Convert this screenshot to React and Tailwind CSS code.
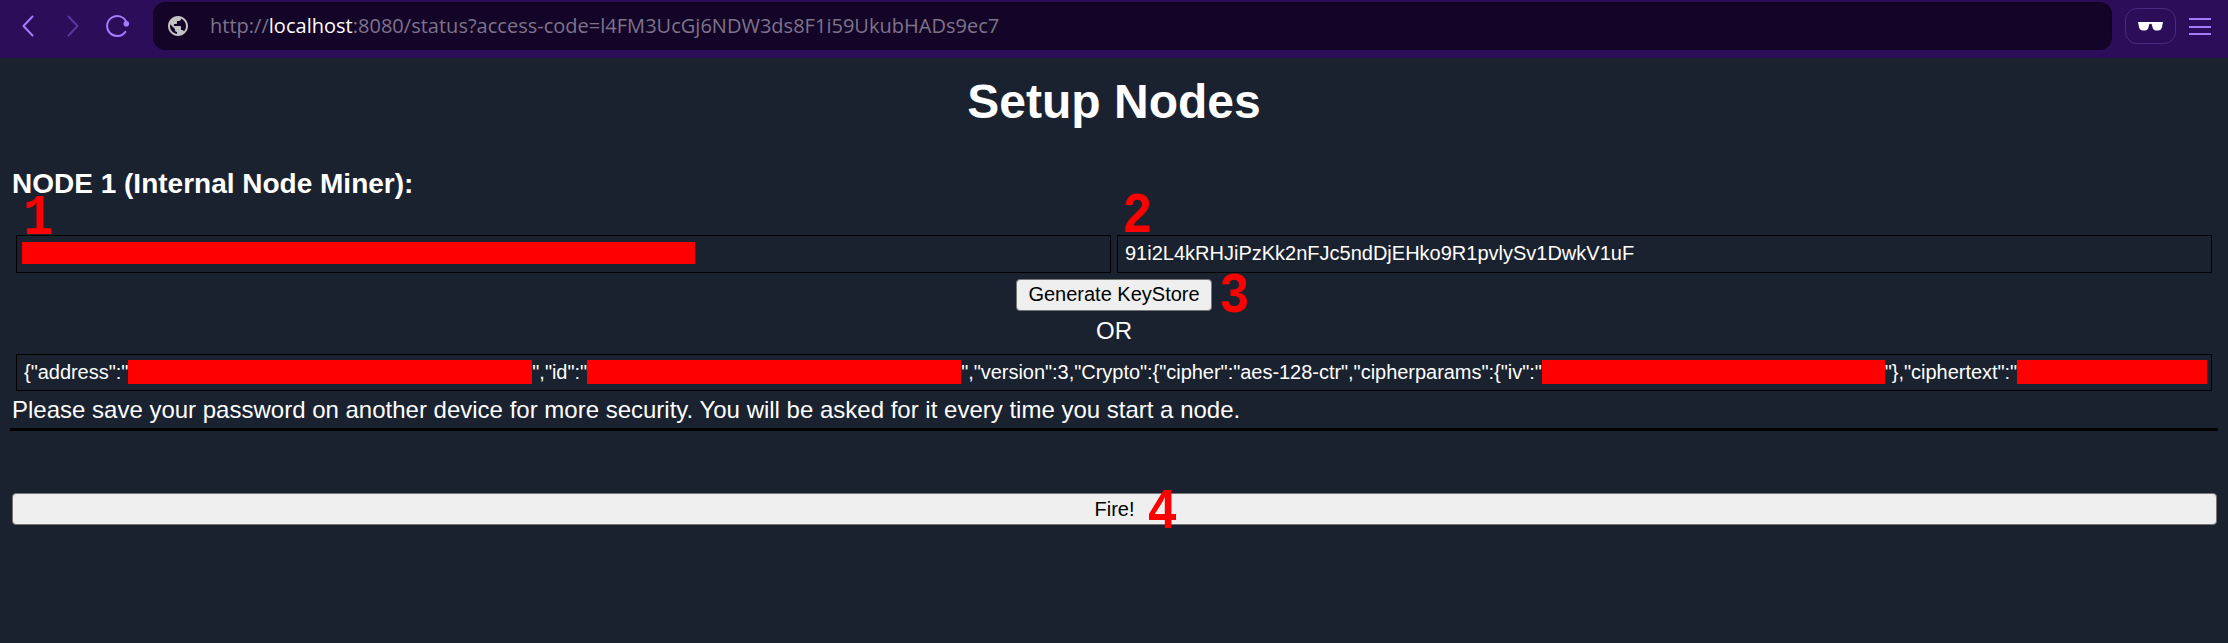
import { MdPublic } from "react-icons/md";

const Redacted = ({ className }) => <span className={`h-6 shrink-0 bg-[#ff0000] ${className}`} />;

const Marker = ({ children, className }) => (
  <span className={`absolute scale-x-[0.87] font-['Liberation_Mono',monospace] text-[58px] leading-[60px] font-bold text-[#ff0000] ${className}`}>
    {children}
  </span>
);

function Toolbar() {
  return (
    <header className="flex h-[58px] w-full items-start bg-[#2b0d59] text-[#a67cff]">
      <nav className="flex h-[52px] w-[153px] items-center">
        <svg className="ml-[20px] h-6 w-[16px]" viewBox="0 0 16 24" fill="none" stroke="currentColor" strokeWidth="2" strokeLinecap="round" strokeLinejoin="round"><path d="M12.500 2.500 3.500 12 12.500 21.500" /></svg>
        <svg className="ml-[30px] h-6 w-[16px] text-[#5b35a0]" viewBox="0 0 16 24" fill="none" stroke="currentColor" strokeWidth="2" strokeLinecap="round" strokeLinejoin="round"><path d="M2.500 2.500 11.500 12 2.500 21.500" /></svg>
        <svg className="ml-[22px] h-6 w-[28px]" viewBox="0 0 28 24" fill="none" stroke="currentColor" strokeWidth="2" strokeLinecap="round"><path d="M22.300 8A10 10 0 1 0 21.300 17.800" /><circle cx="22.300" cy="9.800" r="2.800" fill="currentColor" stroke="none" /></svg>
      </nav>
      <div className="mt-0.5 flex h-12 w-[1959px] items-center rounded-xl border border-[#12041f] bg-[#140428] pl-3">
        <MdPublic className="size-6 text-[#c3c3c3]" />
        <span className="ml-5 font-['Open_Sans',sans-serif] text-[20px] tracking-[0.015px] whitespace-pre text-[#7d748b]">
          http://<span className="text-white">localhost</span>:8080/status?access-code=l4FM3UcGj6NDW3ds8F1i59UkubHADs9ec7
        </span>
      </div>
      <div className="mt-2 ml-[13px] flex h-9 w-[51px] items-center justify-center rounded-xl border border-[#4a2a80]">
        <svg className="h-[9px] w-[25px]" viewBox="0 0 25 9" fill="white"><path d="M0 0H25L24 5Q23.200 8.500 20 8.500H18Q15.400 8.500 14.400 5L13.600 2Q12.500 1.300 11.400 2L10.600 5Q9.600 8.500 7 8.500H5Q1.800 8.500 1 5Z" /></svg>
      </div>
      <div className="mt-[18px] ml-[13px] flex w-[22px] flex-col gap-[5.500px]">
        <span className="h-0.5 bg-[#a67cff]" /><span className="h-0.5 bg-[#a67cff]" /><span className="h-0.5 bg-[#a67cff]" />
      </div>
    </header>
  );
}

export default function App() {
  return (
    <div className="flex h-[643px] w-[2228px] flex-col overflow-hidden bg-[#1a2230] font-['Liberation_Sans',Arial,sans-serif] text-2xl text-white">
      <Toolbar />
      <main className="flex flex-col px-3">
        <h1 className="mt-4 text-center text-[48px] leading-[56px] font-bold">Setup Nodes</h1>
        <h3 className="relative mt-[38px] text-[28px] leading-8 font-bold">
          NODE 1 (Internal Node Miner):
          <Marker className="top-[21px] left-[9px]">1</Marker>
        </h3>
        <div className="mt-[35px] flex gap-1.5 px-1">
          <div className="flex h-[38px] w-[1095px] border border-black pt-1.5 pl-[5px]">
            <span className="h-[22px] w-[673px] bg-[#ff0000]" />
          </div>
          <div className="relative flex h-[38px] w-[1095px] items-center border border-black pb-0.5 pl-[7px] text-[20px]">
            91i2L4kRHJiPzKk2nFJc5ndDjEHko9R1pvlySv1DwkV1uF
            <Marker className="-top-[49px] left-[2px]">2</Marker>
          </div>
        </div>
        <div className="relative mt-1.5 flex justify-center">
          <button className="h-8 w-[196px] rounded-[4px] border border-[#767676] bg-[#efefef] pb-0.5 text-[20px] leading-[28px] text-black">Generate KeyStore</button>
          <Marker className="-top-[12px] left-[1205px]">3</Marker>
        </div>
        <div className="mt-1.5 text-center leading-7">OR</div>
        <div className="mt-[9px] ml-1 flex h-[37px] w-[2196px] items-start overflow-hidden border border-black pt-[5px] pl-[7px] text-[20px] leading-6 tracking-[-0.033px] whitespace-pre">
          {'{"address":"'}<Redacted className="w-[404px]" />{'","id":"'}<Redacted className="w-[374px]" />
          {'","version":3,"Crypto":{"cipher":"aes-128-ctr","cipherparams":{"iv":"'}<Redacted className="w-[343px]" />
          {'"},"ciphertext":"'}<Redacted className="w-[190px]" />
        </div>
        <p className="mt-[5px] leading-7">Please save your password on another device for more security. You will be asked for it every time you start a node.</p>
        <hr className="-mx-0.5 mt-[4px] border-t-[3px] border-black" />
        <div className="relative mt-[62px] -mr-px flex">
          <button className="h-8 w-full rounded-[4px] border border-[#767676] bg-[#efefef] text-[20px] leading-[28px] text-black">Fire!</button>
          <Marker className="-top-[10px] left-[1133px]">4</Marker>
        </div>
      </main>
    </div>
  );
}
